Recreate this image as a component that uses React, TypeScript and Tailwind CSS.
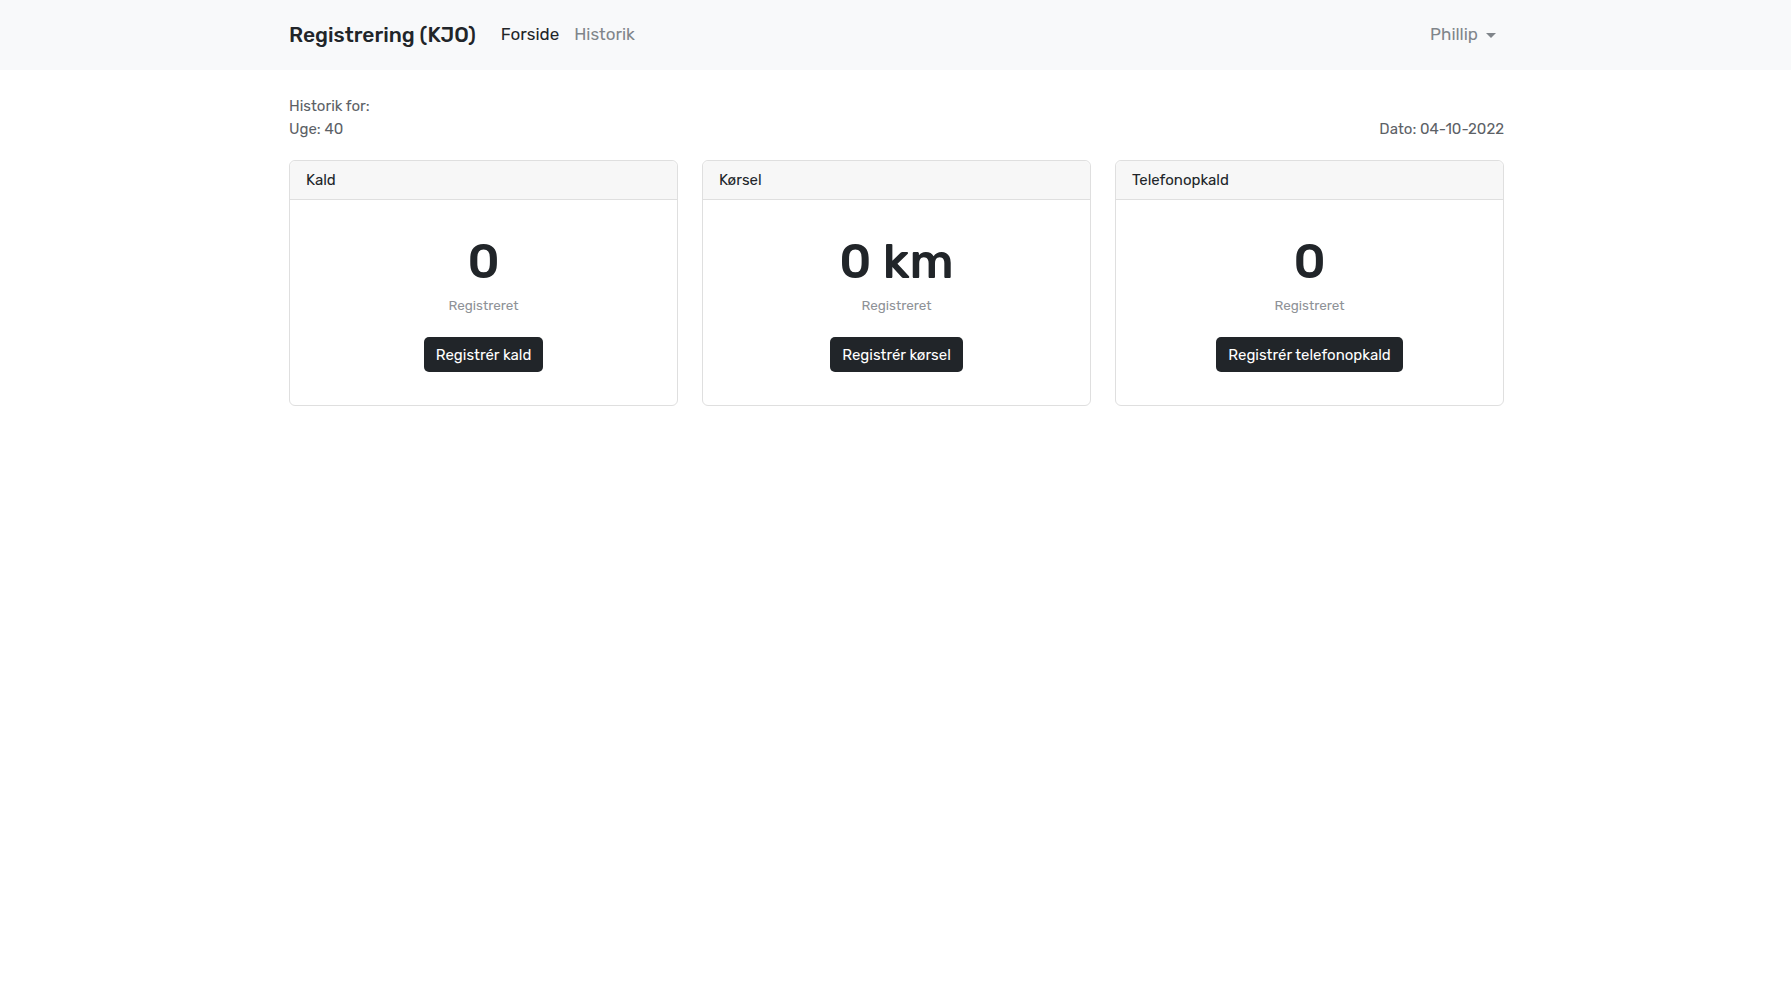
import React from "react";

const font = { fontFamily: "Rubik, Roboto, 'Noto Sans', sans-serif" };

function Card({ title, value, label }: { title: string; value: string; label: string }) {
  return (
    <div className="flex flex-col rounded-[6px] border border-[#dfdfdf] bg-white">
      <div className="h-[39px] flex items-center px-4 pt-[1px] bg-[#f7f7f7] border-b border-[#dfdfdf] rounded-t-[6px] text-[15px] text-[#212529]">
        {title}
      </div>
      <div className="flex flex-col items-center pt-[32px] pb-[33px]">
        <div className="text-[49px] leading-[58px] font-medium text-[#212529]">{value}</div>
        <div className="mt-[5px] text-[13.5px] leading-[20px] text-[#8e9297]">Registreret</div>
        <button className="mt-[22px] h-[35px] px-[12px] rounded-[5px] bg-[#212529] text-white text-[15px] leading-[22px]">
          Registrér {label}
        </button>
      </div>
    </div>
  );
}

export default function App() {
  return (
    <div className="min-h-[1008px] bg-white text-[#212529]" style={font}>
      <nav className="h-[70px] bg-[#f8f9fa]">
        <div className="w-[1217px] pl-[2px] mx-auto h-full flex items-center">
          <span className="text-[21px] font-medium text-[#212529] mr-[25px]">Registrering (KJO)</span>
          <span className="text-[17px] text-[#212529] mr-[15px]">Forside</span>
          <span className="text-[17px] text-[#80858a]">Historik</span>
          <div className="ml-auto mr-[8px] flex items-center text-[17px] text-[#80858a]">
            Phillip
            <span className="ml-[8px] inline-block w-0 h-0 border-l-[5px] border-r-[5px] border-t-[5px] border-l-transparent border-r-transparent border-t-[#80858a]" />
          </div>
        </div>
      </nav>
      <main className="w-[1217px] pl-[2px] mx-auto pt-[25px]">
        <div className="flex justify-between items-end text-[15px] leading-[23px] text-[#5c6166]">
          <div>
            <div>Historik for:</div>
            <div>Uge: 40</div>
          </div>
          <div>Dato: 04-10-2022</div>
        </div>
        <div className="mt-[19px] grid grid-cols-3 gap-[24px]">
          <Card title="Kald" value="0" label="kald" />
          <Card title="Kørsel" value="0 km" label="kørsel" />
          <Card title="Telefonopkald" value="0" label="telefonopkald" />
        </div>
      </main>
    </div>
  );
}
